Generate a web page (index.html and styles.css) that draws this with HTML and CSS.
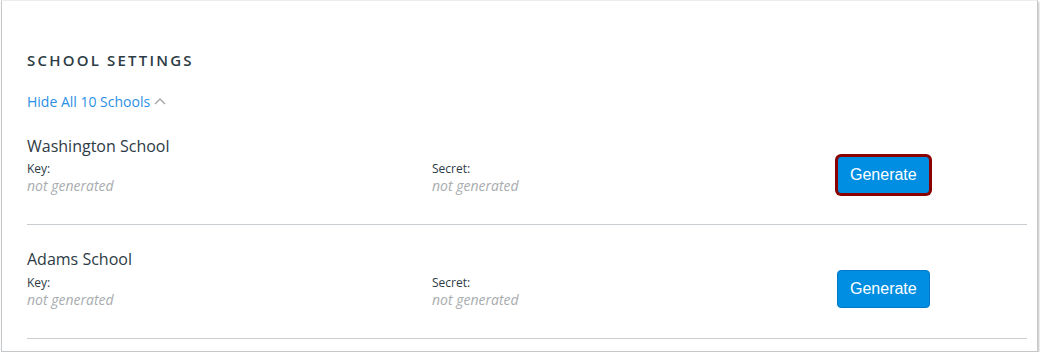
FILE: index.html
```html
<!DOCTYPE html>
<html lang="en">

<head>
    <meta charset="UTF-8">
    <meta name="viewport" content="width=device-width, initial-scale=1.0">
    <title>School Settings</title>
    <link rel="stylesheet" href="styles.css">
</head>

<body>
    <div class="card">
        <h2 class="title">SCHOOL SETTINGS</h2>
        <a class="toggle" href="#">Hide All 10 Schools
            <svg class="chevron" width="12" height="7" viewBox="0 0 12 7">
                <path d="M1 6 L6 1 L11 6" fill="none" stroke="#a0a5a9" stroke-width="1.4" />
            </svg>
        </a>

        <div class="school">
            <div class="school-name">Washington School</div>
            <div class="fields">
                <div class="field">
                    <div class="label">Key:</div>
                    <div class="value">not generated</div>
                </div>
                <div class="field">
                    <div class="label">Secret:</div>
                    <div class="value">not generated</div>
                </div>
                <button class="btn-generate focused">Generate</button>
            </div>
        </div>

        <div class="school">
            <div class="school-name">Adams School</div>
            <div class="fields">
                <div class="field">
                    <div class="label">Key:</div>
                    <div class="value">not generated</div>
                </div>
                <div class="field">
                    <div class="label">Secret:</div>
                    <div class="value">not generated</div>
                </div>
                <button class="btn-generate">Generate</button>
            </div>
        </div>
    </div>
</body>

</html>
```

FILE: styles.css
```css
body {
    margin: 0;
    background: #fff;
    font-family: 'Open Sans', 'Noto Sans', sans-serif;
    color: #2d3b45;
}

.card {
    margin: 0 2px 0 1px;
    padding: 47px 10px 12px 25px;
    border: 1px solid #c4c8cb;
    border-top-color: #ececec;
    box-shadow: 1px 2px 2px rgba(0, 0, 0, 0.25);
}

.title {
    margin: 0;
    font-size: 15px;
    line-height: 24px;
    font-weight: 600;
    letter-spacing: 2.2px;
}

.toggle {
    display: inline-flex;
    align-items: center;
    gap: 4px;
    margin-top: 20px;
    font-size: 14px;
    line-height: 20px;
    color: #2b8fe5;
    text-decoration: none;
}

.chevron {
    margin-top: -2px;
}

.school {
    padding: 23px 0 28px;
    border-bottom: 1px solid #c7cdd1;
}

.school-name {
    font-size: 16px;
    line-height: 22px;
    margin-bottom: 4px;
}

.school + .school .school-name {
    margin-bottom: 5px;
}

.fields {
    display: grid;
    grid-template-columns: 405px 405px 1fr;
}

.label {
    font-size: 12px;
    line-height: 15px;
}

.value {
    font-size: 14px;
    line-height: 20px;
    font-style: italic;
    color: #a8acaf;
}

.btn-generate {
    justify-self: start;
    align-self: end;
    margin: -5px 0 2px;
    height: 38px;
    padding: 0 12px;
    border: 1px solid #0378c5;
    border-radius: 4px;
    background: #008ee2;
    color: #fff;
    font-family: 'Liberation Sans', Arial, sans-serif;
    font-size: 16px;
}

.btn-generate.focused {
    border-color: #8b0000;
    box-shadow: 0 0 0 2px #8b0000;
}
```
